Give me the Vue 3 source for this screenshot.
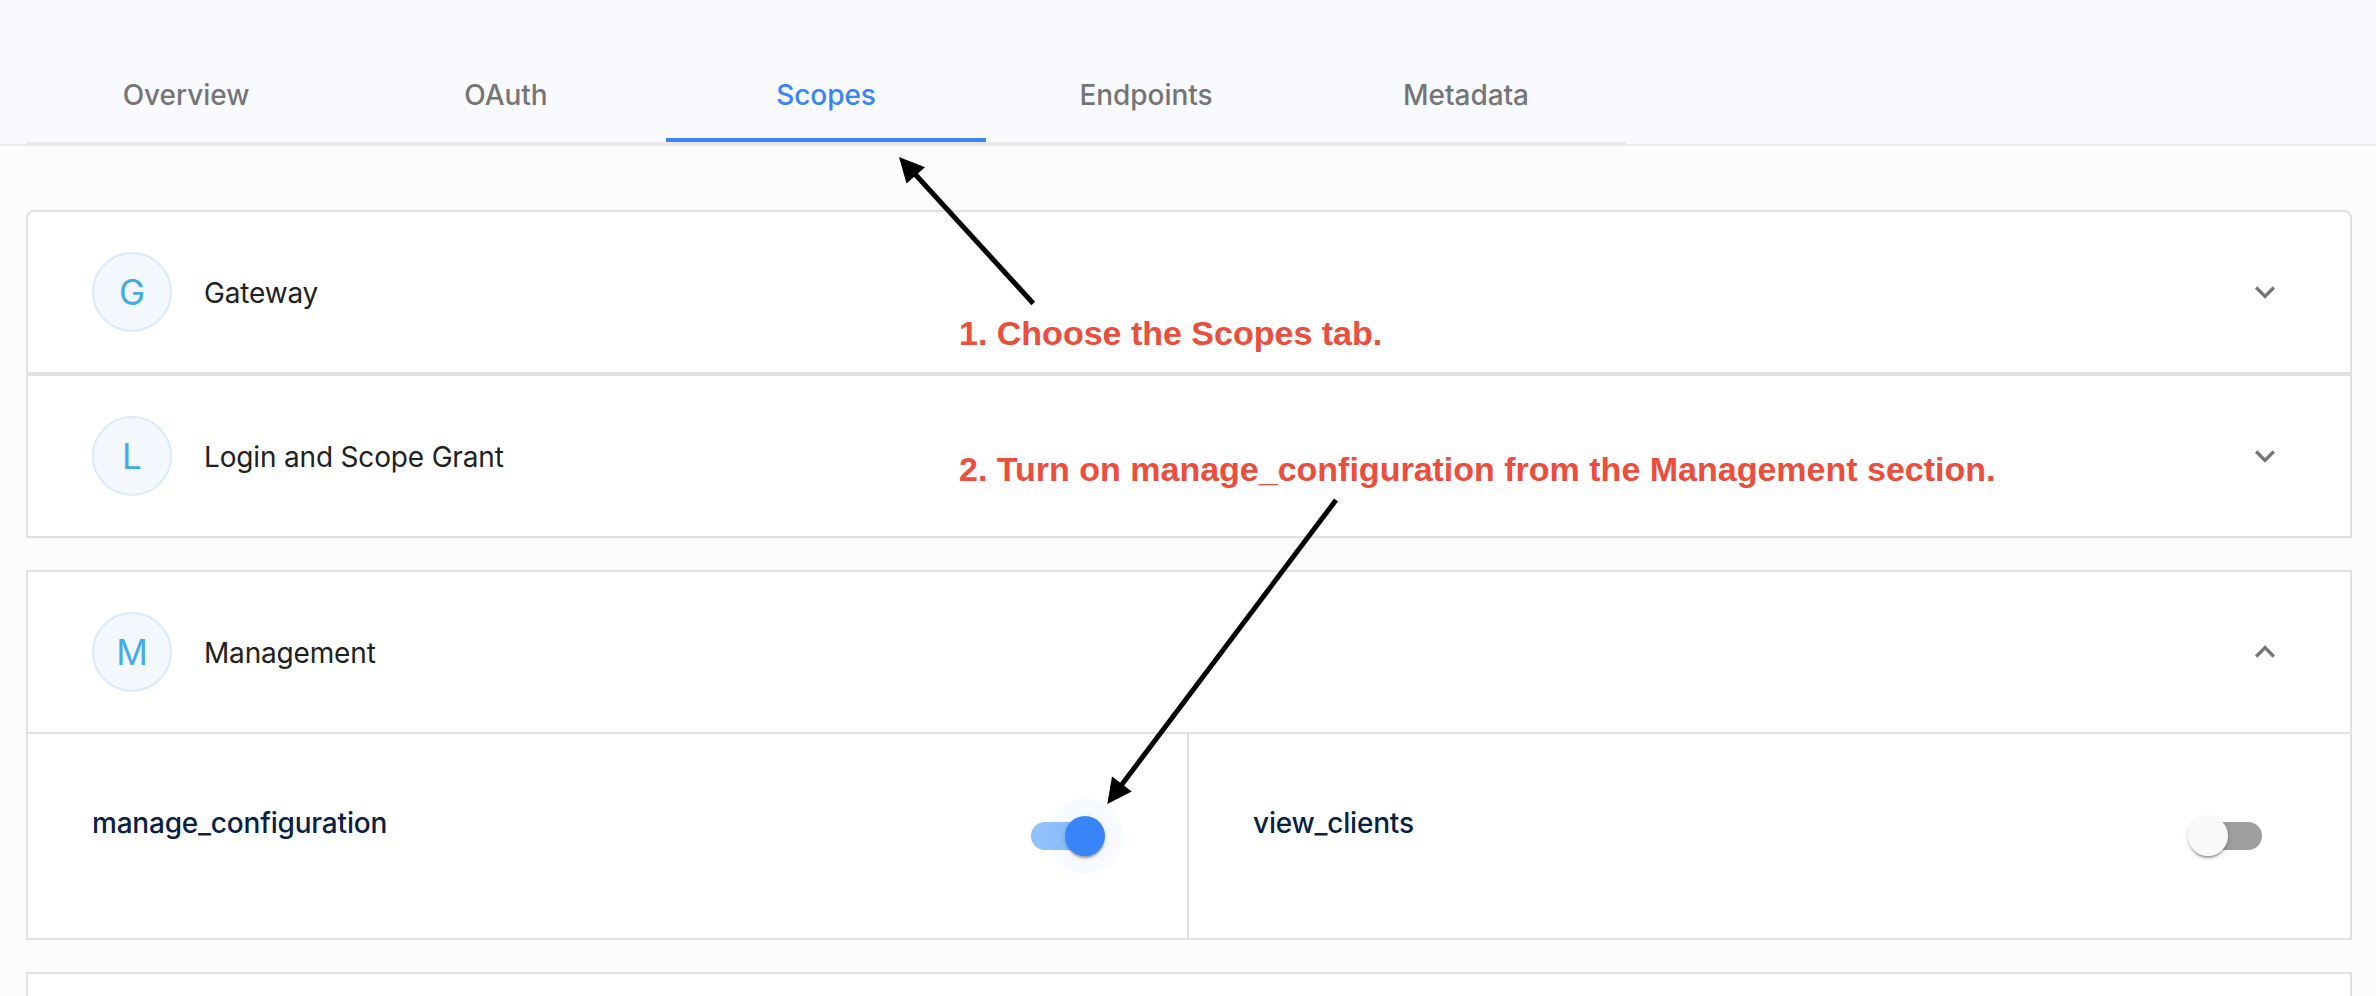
<script setup>
import { ref } from 'vue'

const tabs = ['Overview', 'OAuth', 'Scopes', 'Endpoints', 'Metadata']
const active = ref('Scopes')

const groups = ref([
  { name: 'Gateway', open: false, scopes: [] },
  { name: 'Login and Scope Grant', open: false, scopes: [] },
  {
    name: 'Management',
    open: true,
    scopes: [
      { name: 'manage_configuration', on: true },
      { name: 'view_clients', on: false },
    ],
  },
])
</script>

<template>
  <div class="page">
    <header class="header">
      <nav class="tabs">
        <button
          v-for="tab in tabs"
          :key="tab"
          class="tab"
          :class="{ active: tab === active }"
          @click="active = tab"
        >{{ tab }}</button>
      </nav>
    </header>

    <main class="groups">
      <section v-for="group in groups" :key="group.name" class="group" :class="{ open: group.open }">
        <div class="summary" @click="group.open = !group.open">
          <span class="avatar">{{ group.name[0] }}</span>
          <span class="title">{{ group.name }}</span>
          <svg class="chevron" viewBox="0 0 24 24">
            <path d="M16.59 8.59 12 13.17 7.41 8.59 6 10l6 6 6-6z" />
          </svg>
        </div>
        <div v-if="group.open" class="scopes">
          <div v-for="scope in group.scopes" :key="scope.name" class="scope">
            <span class="scope-name">{{ scope.name }}</span>
            <span class="switch" :class="{ on: scope.on }" @click="scope.on = !scope.on">
              <span class="track"></span>
              <span class="halo"><span class="thumb"></span></span>
            </span>
          </div>
        </div>
      </section>
      <section class="group next"></section>
    </main>

    <svg class="arrows" viewBox="0 0 2376 996">
      <path class="shaft" d="M1033.300 303.500 914 173" />
      <path d="M899 157 925 167.300 906.500 183.500z" />
      <path class="shaft" d="M1336 500 1120 787" />
      <path d="M1107.300 804 1112 776.500 1131.800 791.500z" />
    </svg>
    <p class="note first">1. Choose the Scopes tab.</p>
    <p class="note second">2. Turn on manage_configuration from the Management section.</p>
  </div>
</template>

<style>
body {
  margin: 0;
  background: #fcfcfe;
}
</style>

<style scoped>
.page {
  position: relative;
  height: 996px;
  overflow: hidden;
  background: #fcfcfe;
  font-family: Inter, sans-serif;
  font-size: 28px;
  color: #212121;
}

.header {
  box-sizing: border-box;
  height: 146px;
  padding: 46px 26px 0;
  background: #f9faff;
  border-bottom: 2px solid #ebebeb;
}

.tabs {
  box-sizing: border-box;
  display: flex;
  width: 1600px;
  height: 100px;
  border-bottom: 4px solid #e9e9e9;
}

.tab {
  box-sizing: border-box;
  flex: 1;
  padding: 6px 0 0;
  border: 0;
  border-bottom: 4px solid transparent;
  background: none;
  font: 500 28px/40px Inter, sans-serif;
  letter-spacing: -0.05px;
  color: #757575;
}

.tab.active {
  color: #3884f9;
  border-bottom-color: #3884f9;
}

.groups {
  padding: 64px 24px 0 26px;
}

.group {
  background: #fff;
  border: 2px solid #e0e0e0;
}

.group:first-child {
  border-radius: 8px 8px 0 0;
}

.group.open,
.group.next {
  margin-top: 32px;
}

.group.next {
  height: 160px;
}

.summary {
  display: flex;
  align-items: center;
  height: 160px;
  padding: 0 64px;
}

.avatar {
  box-sizing: border-box;
  display: flex;
  align-items: center;
  justify-content: center;
  width: 80px;
  height: 80px;
  border: 2px solid #d9ebf8;
  border-radius: 50%;
  background: #f2f8fd;
  color: #45aae9;
  font-size: 35px;
}

.title {
  flex: 1;
  margin-left: 32px;
  padding-top: 2px;
  letter-spacing: -0.17px;
}

.chevron {
  width: 40px;
  height: 40px;
  margin-right: 1px;
  fill: #757575;
}

.open .chevron {
  transform: rotate(180deg);
}

.scopes {
  display: grid;
  grid-template-columns: 1fr 1fr;
  border-top: 2px solid #e0e0e0;
}

.scope {
  box-sizing: border-box;
  display: flex;
  justify-content: space-between;
  height: 204px;
  padding: 64px;
}

.scope:first-child {
  border-right: 2px solid #e0e0e0;
}

.scope-name {
  font-weight: 500;
  line-height: 50px;
  letter-spacing: -0.2px;
  color: #0a1f44;
}

.switch {
  position: relative;
  box-sizing: border-box;
  width: 116px;
  height: 76px;
  padding: 24px;
}

.track {
  display: block;
  height: 28px;
  border-radius: 14px;
  background: #9e9e9e;
}

.on .track {
  background: #8fc1fb;
}

.halo {
  position: absolute;
  top: 0;
  left: 0;
  box-sizing: border-box;
  width: 76px;
  height: 76px;
  padding: 18px;
  border-radius: 50%;
}

.on .halo {
  left: 40px;
  background: rgba(56, 132, 249, 0.04);
}

.thumb {
  display: block;
  width: 40px;
  height: 40px;
  border-radius: 50%;
  background: #fafafa;
  box-shadow: 0 4px 2px -2px rgba(0, 0, 0, 0.2), 0 2px 2px rgba(0, 0, 0, 0.14), 0 2px 6px rgba(0, 0, 0, 0.12);
}

.on .thumb {
  background: #3884f9;
}

.arrows {
  position: absolute;
  inset: 0;
  width: 2376px;
  height: 996px;
  pointer-events: none;
}

.shaft {
  stroke: #000;
  stroke-width: 5;
  fill: none;
}

.note {
  position: absolute;
  left: 959px;
  margin: 0;
  font: bold 34px/40px "Liberation Sans", sans-serif;
  color: #ec4d3c;
  white-space: nowrap;
}

.first {
  top: 313px;
}

.second {
  top: 449px;
}
</style>
